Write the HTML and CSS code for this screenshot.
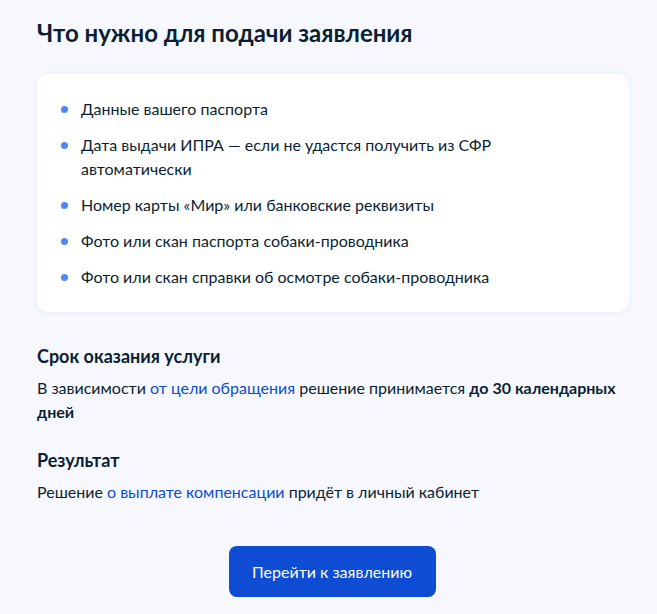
FILE: index.html
```html
<!DOCTYPE html>
<html lang="ru">
<head>
    <meta charset="UTF-8">
    <meta name="viewport" content="width=device-width, initial-scale=1.0">
    <title>Что нужно для подачи заявления</title>
    <link rel="stylesheet" href="styles.css">
</head>
<body>
    <main class="page">
        <h1 class="title">Что нужно для подачи заявления</h1>

        <div class="card">
            <ul class="docs">
                <li>Данные вашего паспорта</li>
                <li>Дата выдачи ИПРА — если не удастся получить из СФР автоматически</li>
                <li>Номер карты «Мир» или банковские реквизиты</li>
                <li>Фото или скан паспорта собаки-проводника</li>
                <li>Фото или скан справки об осмотре собаки-проводника</li>
            </ul>
        </div>

        <section class="info">
            <h2>Срок оказания услуги</h2>
            <p>В зависимости <a href="#">от цели обращения</a> решение принимается <b>до 30 календарных дней</b></p>
        </section>

        <section class="info">
            <h2>Результат</h2>
            <p>Решение <a href="#">о выплате компенсации</a> придёт в личный кабинет</p>
        </section>

        <div class="actions">
            <button class="btn">Перейти к заявлению</button>
        </div>
    </main>
</body>
</html>
```

FILE: styles.css
```css
/* Цвета */
:root {
  --bg: #f6f8fe;
  --text: #0b1f33;
  --link: #0d4cd3;
  --dot: #4e86f5;
}
body {
  margin: 0;
  padding: 0;
  font-family: Lato, 'Noto Sans', sans-serif;
  background: var(--bg);
  color: var(--text);
}
.page {
  width: 592px;
  padding: 17px 0 0 37px;
}
.title {
  margin: 0;
  font-size: 24px;
  line-height: 32px;
  font-weight: 700;
}
.card {
  margin-top: 25px;
  background: #fff;
  border-radius: 12px;
  box-shadow: 0 1px 6px rgba(60, 90, 180, 0.08);
  padding: 23px 24px;
}
.docs {
  list-style: none;
  margin: 0;
  padding: 0;
  display: flex;
  flex-direction: column;
  gap: 12px;
}
.docs li {
  position: relative;
  padding-left: 20px;
  padding-right: 100px;
  font-size: 16px;
  line-height: 24px;
}
.docs li::before {
  content: '';
  position: absolute;
  left: 0;
  top: 9px;
  width: 7px;
  height: 7px;
  border-radius: 50%;
  background: var(--dot);
}
.info {
  margin-top: 32px;
}
.info + .info {
  margin-top: 24px;
}
.info h2 {
  margin: 0;
  font-size: 18px;
  line-height: 24px;
  font-weight: 700;
}
.info p {
  margin: 8px 0 0;
  font-size: 16px;
  line-height: 24px;
}
.info a {
  color: var(--link);
  text-decoration: none;
}
.info b {
  font-weight: 700;
}
.actions {
  display: flex;
  justify-content: center;
  margin-top: 42px;
  padding-right: 2px;
}
.btn {
  width: 207px;
  height: 51px;
  border: none;
  border-radius: 8px;
  background: var(--link);
  color: #fff;
  font-family: inherit;
  font-size: 16px;
  cursor: pointer;
}
```
